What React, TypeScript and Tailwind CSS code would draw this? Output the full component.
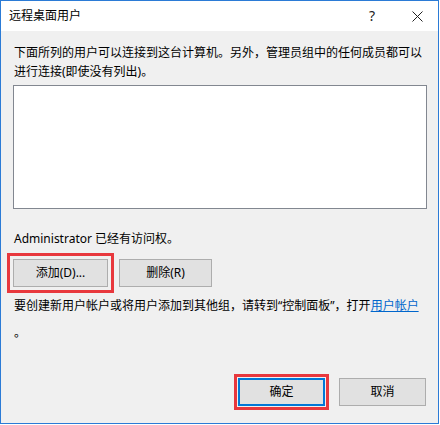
import React from 'react';

const font = "font-['Noto_Sans','Noto_Sans_CJK_SC',sans-serif]";

function WinButton({ children, width, focused }: { children: React.ReactNode; width: string; focused?: boolean }) {
  return (
    <button
      type="button"
      className={`${width} h-[28px] bg-[#e1e1e1] text-[12px] text-black leading-none flex items-center justify-center ${
        focused ? 'border-2 border-[#0078d7]' : 'border border-[#adadad]'
      }`}
    >
      {children}
    </button>
  );
}

export default function App() {
  return (
    <div className={`w-[440px] h-[425px] bg-white ${font}`}>
      <div className="w-[439px] h-[424px] border border-[#2b7bd6] bg-[#f0f0f0] flex flex-col text-[12px] text-black">
        {/* title bar */}
        <div className="h-[30px] bg-white flex items-center shrink-0">
          <span className="pl-[8px] text-[12px] leading-none">远程桌面用户</span>
          <span className="ml-auto mr-[37px] text-[14px] leading-none text-[#222]">?</span>
          <svg width="11" height="11" viewBox="0 0 11 11" className="mr-[15px]">
            <path d="M0.5 0.5 L10.5 10.5 M10.5 0.5 L0.5 10.5" stroke="#222" strokeWidth="1" fill="none" />
          </svg>
        </div>

        <div className="flex-1 flex flex-col px-[12px] pt-[12px] pb-[13px]">
          <p className="pl-[1px] leading-[19px]">
            下面所列的用户可以连接到这台计算机。另外，管理员组中的任何成员都可以进行连接(即使没有列出)。
          </p>

          <div className="mt-[4px] h-[124px] w-[414px] bg-white border border-[#828790]" />

          <p className="mt-[20px] pl-[1px] leading-[19px]">Administrator 已经有访问权。</p>

          <div className="mt-[5px] flex items-center">
            <div className="-ml-[6px] border-[3px] border-[#e8383d] p-[3px]">
              <WinButton width="w-[95px]">添加(D)...</WinButton>
            </div>
            <div className="ml-[5px]">
              <WinButton width="w-[93px]">删除(R)</WinButton>
            </div>
          </div>

          <p className="mt-[3px] pl-[1px] leading-[19px]">
            要创建新用户帐户或将用户添加到其他组，请转到“控制面板”，打开
            <span className="text-[#0066cc] underline">用户帐户</span>
          </p>
          <p className="mt-[8px] pl-[1px] leading-[19px]">。</p>

          <div className="mt-auto flex items-center justify-end">
            <div className="border-[3px] border-[#e8383d] p-[1px]">
              <WinButton width="w-[87px]" focused>
                确定
              </WinButton>
            </div>
            <div className="ml-[10px]">
              <WinButton width="w-[87px]">取消</WinButton>
            </div>
          </div>
        </div>
      </div>
    </div>
  );
}
